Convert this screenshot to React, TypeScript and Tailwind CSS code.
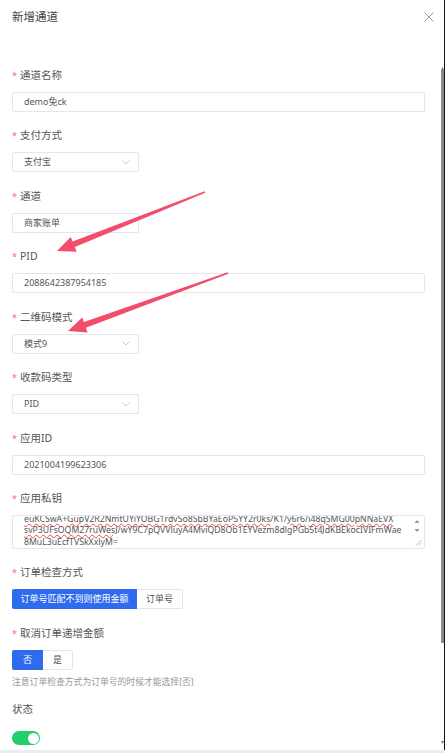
import React from "react";

const font = { fontFamily: '"Noto Sans", "Noto Sans CJK SC", sans-serif' };

function Label({ text, req = true }: { text: string; req?: boolean }) {
  return (
    <div className="h-[17px] flex items-center text-[10.5px] text-[#555] leading-[17px]">
      {req && <span className="text-[#f56c6c] mr-[3px] text-[9px]">*</span>}
      <span>{text}</span>
    </div>
  );
}

function Input({ value, w = "w-full" }: { value: string; w?: string }) {
  return (
    <div className={`${w} h-[20px] mt-[8px] border border-[#e4e6eb] rounded-[2px] flex items-center pl-[11px] text-[9px] text-[#555]`}>
      {value}
    </div>
  );
}

function Select({ value }: { value: string }) {
  return (
    <div className="w-[127px] h-[20px] mt-[8px] border border-[#e4e6eb] rounded-[2px] flex items-center justify-between pl-[11px] pr-[8px] text-[9px] text-[#555]">
      <span>{value}</span>
      <svg width="8" height="5" viewBox="0 0 8 5">
        <path d="M0.5 0.5 L4 4 L7.5 0.5" fill="none" stroke="#c0c4cc" strokeWidth="0.9" />
      </svg>
    </div>
  );
}

function Field({ children }: { children: React.ReactNode }) {
  return <div className="mb-[15.5px]">{children}</div>;
}

const W = ({ children }: { children: React.ReactNode }) => (
  <span className="underline decoration-wavy decoration-[#e5484d] decoration-[0.8px] underline-offset-[1px]">{children}</span>
);

export default function App() {
  return (
    <div className="w-[445px] h-[753px] bg-white relative overflow-hidden flex flex-col" style={font}>
      <div className="flex flex-1 min-h-0">
        <div className="flex-1 min-w-0 flex flex-col">
          {/* header */}
          <div className="h-[14px] mt-[10px] flex items-center justify-between pl-[12px] pr-[7px]">
            <span className="text-[11.5px] text-[#444]">新增通道</span>
            <svg width="10" height="10" viewBox="0 0 10 10">
              <path d="M0.5 0.5 L9.5 9.5 M9.5 0.5 L0.5 9.5" stroke="#999" strokeWidth="1" />
            </svg>
          </div>

          <div className="pl-[12px] pr-[16px] mt-[42.5px]">
            <Field>
              <Label text="通道名称" />
              <Input value="demo免ck" />
            </Field>
            <Field>
              <Label text="支付方式" />
              <Select value="支付宝" />
            </Field>
            <Field>
              <Label text="通道" />
              <Input value="商家账单" w="w-[127px]" />
            </Field>
            <Field>
              <Label text="PID" />
              <Input value="2088642387954185" />
            </Field>
            <Field>
              <Label text="二维码模式" />
              <Select value="模式9" />
            </Field>
            <Field>
              <Label text="收款码类型" />
              <Select value="PID" />
            </Field>
            <Field>
              <Label text="应用ID" />
              <Input value="2021004199623306" />
            </Field>
            <div className="mb-[15px]">
              <Label text="应用私钥" />
              <div className="mt-[8px] h-[34px] border border-[#e4e6eb] rounded-[2px] relative overflow-hidden">
                <div className="pl-[11px] pr-[22px] text-[8.7px] leading-[11.5px] text-[#555] whitespace-nowrap -mt-[2.5px]">
                  <div>
                    <W>euKCSwA</W>+<W>GupV2R2NmtUYiYOBG1rdvSo8SbBYaEoP5YY2r0ks</W>/K1/<W>y6r6</W>/<W>i48qSMG00pNNaEVX</W>
                  </div>
                  <div>
                    <W>svP3UFsOQM27ruWesJ</W>/wY9C7pQVVluyA4MviQD8Ob1EYVezm8dlgPGb5t4JdKBEkocIVIFmWae
                  </div>
                  <div>8MuL3uEcfTVSkXxlyM=</div>
                </div>
                <svg className="absolute right-[4px] top-[3px]" width="6" height="14" viewBox="0 0 6 14">
                  <path d="M0.5 4 L3 1 L5.5 4 Z" fill="#999" />
                  <path d="M0.5 10 L3 13 L5.5 10 Z" fill="#999" />
                </svg>
                <svg className="absolute right-[2px] bottom-[2px]" width="7" height="7" viewBox="0 0 7 7">
                  <path d="M6.5 1 L1 6.5 M6.5 4 L4 6.5" stroke="#aaa" strokeWidth="0.8" />
                </svg>
              </div>
            </div>
            <div className="mb-[16px]">
              <Label text="订单检查方式" />
              <div className="mt-[8px] flex h-[20px] text-[9px]">
                <div className="w-[125px] bg-[#2f6bef] text-white flex items-center justify-center rounded-l-[2px]">
                  订单号匹配不到则使用金额
                </div>
                <div className="w-[46px] border border-l-0 border-[#e4e6eb] text-[#555] flex items-center justify-center rounded-r-[2px]">
                  订单号
                </div>
              </div>
            </div>
            <div>
              <Label text="取消订单递增金额" />
              <div className="mt-[8px] flex h-[20px] text-[9px]">
                <div className="w-[31px] bg-[#2f6bef] text-white flex items-center justify-center rounded-l-[2px]">否</div>
                <div className="w-[30px] border border-l-0 border-[#e4e6eb] text-[#555] flex items-center justify-center rounded-r-[2px]">是</div>
              </div>
              <div className="mt-[6px] h-[13px] leading-[13px] text-[8.8px] text-[#999]">注意订单检查方式为订单号的时候才能选择[否]</div>
            </div>
            <div className="mt-[12px]">
              <Label text="状态" req={false} />
              <div className="mt-[13px] w-[28px] h-[14px] rounded-full bg-[#1fcf6a] relative">
                <div className="absolute right-[1.5px] top-[1.5px] w-[11px] h-[11px] rounded-full bg-white" />
              </div>
            </div>
          </div>
        </div>
        {/* scrollbar */}
        <div className="w-[3px] relative flex flex-col">
          <div className="h-[62px]" />
          <div className="h-[8px] flex items-end justify-center">
            <svg width="3" height="3" viewBox="0 0 3 3"><path d="M0 3 L1.5 0 L3 3 Z" fill="#777" /></svg>
          </div>
          <div className="h-[573px] bg-[#8c8c8c]" />
          <div className="flex-1 flex items-end justify-center pb-[6px]">
            <svg width="3" height="3" viewBox="0 0 3 3"><path d="M0 0 L1.5 3 L3 0 Z" fill="#777" /></svg>
          </div>
        </div>
        <div className="w-[1.5px] bg-[#111]" />
      </div>
      <div className="h-[3px] bg-[#ececec]" />

      {/* annotation arrows */}
      <svg className="absolute inset-0 pointer-events-none" width="445" height="753" viewBox="0 0 445 753">
        <polygon
          points="57,251 70.7,236.9 72.6,241.5 204.7,191.3 205.3,192.7 74.8,247.1 76.7,251.7"
          fill="#f24d6b"
        />
        <polygon
          points="68,331 82.2,317.4 83.9,322.1 227.7,272.2 228.3,273.8 85.9,327.7 87.6,332.4"
          fill="#f24d6b"
        />
      </svg>
    </div>
  );
}
